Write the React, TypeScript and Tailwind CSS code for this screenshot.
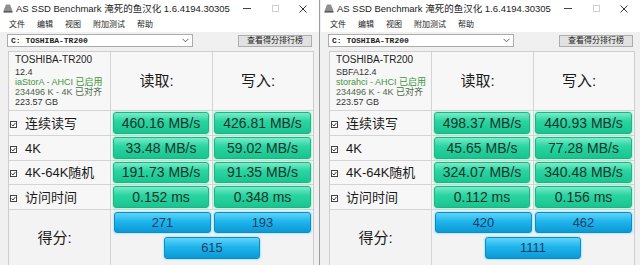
import React from "react";

type Drive = {
  model: string;
  firmware: string;
  driver: string;
  align: string;
  size: string;
  rows: { label: string; read: string; write: string }[];
  score: { read: string; write: string; total: string };
};

const drives: Drive[] = [
  {
    model: "TOSHIBA-TR200",
    firmware: "12.4",
    driver: "iaStorA - AHCI 已启用",
    align: "234496 K - 4K 已对齐",
    size: "223.57 GB",
    rows: [
      { label: "连续读写", read: "460.16 MB/s", write: "426.81 MB/s" },
      { label: "4K", read: "33.48 MB/s", write: "59.02 MB/s" },
      { label: "4K-64K随机", read: "191.73 MB/s", write: "91.35 MB/s" },
      { label: "访问时间", read: "0.152 ms", write: "0.348 ms" },
    ],
    score: { read: "271", write: "193", total: "615" },
  },
  {
    model: "TOSHIBA-TR200",
    firmware: "SBFA12.4",
    driver: "storahci - AHCI 已启用",
    align: "234496 K - 4K 已对齐",
    size: "223.57 GB",
    rows: [
      { label: "连续读写", read: "498.37 MB/s", write: "440.93 MB/s" },
      { label: "4K", read: "45.65 MB/s", write: "77.28 MB/s" },
      { label: "4K-64K随机", read: "324.07 MB/s", write: "340.48 MB/s" },
      { label: "访问时间", read: "0.112 ms", write: "0.156 ms" },
    ],
    score: { read: "420", write: "462", total: "1111" },
  },
];

const font = "font-['Liberation_Sans','Noto_Sans_CJK_SC',sans-serif]";

function GreenBox({ value }: { value: string }) {
  return (
    <div className="flex h-full items-center justify-center rounded-[3px] border border-[#1fb386] bg-[linear-gradient(to_bottom,#79ecc9,#2bd5a2_40%,#1ac490)] text-[14px] text-[#1a352d] shadow-[0_0_0_1px_#bff5df,0_0_3px_#9aeccb]">
      {value}
    </div>
  );
}

function BlueBox({ value, className = "" }: { value: string; className?: string }) {
  return (
    <div
      className={`flex items-center justify-center rounded-[3px] border border-[#0b8ec6] bg-[linear-gradient(to_bottom,#5fd5f9,#1fb5ec_45%,#0c98d4)] text-[13px] text-[#1d3e68] shadow-[0_0_0_1px_#bfeafb,0_0_3px_#9fe0f7] ${className}`}
    >
      {value}
    </div>
  );
}

function Check() {
  return (
    <svg width="7" height="7" viewBox="0 0 7 7" className="mt-[2px] shrink-0">
      <rect x="0.5" y="0.5" width="6" height="6" fill="#fff" stroke="#444" />
      <path d="M1.6 3.5 L3 5 L5.4 2" fill="none" stroke="#222" strokeWidth="0.9" />
    </svg>
  );
}

function Window({ d, first }: { d: Drive; first: boolean }) {
  return (
    <div
      className={`h-[265px] w-[320px] overflow-hidden bg-[#f0f0f0] text-[#1a1a1a] ${font} ${
        first ? "border-r border-[#9c9c9c]" : "pl-px"
      }`}
    >
      {/* title bar */}
      <div className="flex h-[17px] items-center bg-white">
        <svg width="10" height="9" viewBox="0 0 10 9" className="ml-[3px]">
          <path d="M3 0.5 H7 L9.5 7 H0.5 Z" fill="#8f8f8f" />
          <rect x="0.5" y="7" width="9" height="1.6" fill="#5a5a5a" />
        </svg>
        <span className="ml-[3px] text-[9.5px] leading-none text-[#222]">
          AS SSD Benchmark 淹死的鱼汉化 1.6.4194.30305
        </span>
        <div className="ml-auto mr-[2px] flex h-full items-center text-[#333]">
          <span className="flex w-[28px] justify-center">
            <span className="h-px w-[8px] bg-[#444]" />
          </span>
          <span className="flex w-[28px] justify-center">
            <span className="h-[7px] w-[7px] border border-[#cfcfcf]" />
          </span>
          <span className="flex w-[28px] justify-center">
            <svg width="8" height="8" viewBox="0 0 8 8">
              <path d="M0.5 0.5 L7.5 7.5 M7.5 0.5 L0.5 7.5" stroke="#333" strokeWidth="1" />
            </svg>
          </span>
        </div>
      </div>

      {/* menu */}
      <div className="flex h-[15px] items-center gap-[12px] bg-white pl-[9px] text-[8px] text-[#222]">
        <span>文件</span>
        <span>编辑</span>
        <span>视图</span>
        <span>附加测试</span>
        <span>帮助</span>
      </div>

      {/* toolbar */}
      <div className="flex items-center pt-[2px]">
        <div className="ml-[7px] flex h-[13px] w-[186px] items-center border border-[#acacac] bg-white pl-[3px] pr-[3px]">
          <span className="font-['Liberation_Mono',monospace] text-[8px] font-bold leading-none text-[#222]">
            C: TOSHIBA-TR200
          </span>
          <svg width="7" height="5" viewBox="0 0 7 5" className="ml-auto">
            <path d="M0.5 0.8 L3.5 3.8 L6.5 0.8" fill="none" stroke="#555" strokeWidth="0.9" />
          </svg>
        </div>
        <div className="ml-auto mr-[7px] flex h-[12px] w-[74px] items-center justify-center border border-[#adadad] bg-[#e1e1e1] text-[8px] leading-none text-[#222]">
          查看得分排行榜
        </div>
      </div>

      {/* panel */}
      <div className="ml-[8px] mt-[4px] grid w-[306px] grid-cols-[101px_101px_100px] grid-rows-[58px_24px_24px_23px_24px_60px] gap-px border border-[#cdcdcd] bg-[#d4d4d4]">
        <div className="bg-[#f7f7f7] pl-[6px] pt-[2px]">
          <div className="text-[10px] leading-[12px] text-[#222]">{d.model}</div>
          <div className="mt-px text-[9px] leading-[10px] text-[#333]">{d.firmware}</div>
          <div className="whitespace-nowrap text-[9px] leading-[10px] text-[#3e9640]">{d.driver}</div>
          <div className="whitespace-nowrap text-[9px] leading-[10px] text-[#4b6b47]">{d.align}</div>
          <div className="text-[9px] leading-[10px] text-[#333]">{d.size}</div>
        </div>
        <div className="flex items-center justify-center bg-[#f7f7f7] pr-[10px] text-[15px]">读取:</div>
        <div className="flex items-center justify-center bg-[#f7f7f7] pr-[10px] text-[15px]">写入:</div>

        {d.rows.map((r) => (
          <React.Fragment key={r.label}>
            <div className="flex items-center gap-[8px] bg-[#f7f7f7] pl-[1px]">
              <Check />
              <span className="text-[13px] leading-none">{r.label}</span>
            </div>
            <div className="bg-[#f7f7f7] pb-px pl-[2px] pr-[3px] pt-px">
              <GreenBox value={r.read} />
            </div>
            <div className="bg-[#f7f7f7] pb-px pl-[1px] pr-[2px] pt-px">
              <GreenBox value={r.write} />
            </div>
          </React.Fragment>
        ))}

        <div className="flex items-start justify-center bg-[#f3f3f3] pr-[10px] pt-[17px] text-[15px]">
          得分:
        </div>
        <div className="col-span-2 flex flex-col bg-[#f3f3f3] pt-[2px]">
          <div className="flex gap-[3px] pl-[3px] pr-[2px]">
            <BlueBox value={d.score.read} className="h-[21px] flex-1" />
            <BlueBox value={d.score.write} className="h-[21px] flex-1" />
          </div>
          <div className="mt-[4px] flex justify-center">
            <BlueBox value={d.score.total} className="h-[22px] w-[96px]" />
          </div>
        </div>
      </div>
    </div>
  );
}

export default function App() {
  return (
    <div className="flex h-[265px] w-[640px] overflow-hidden bg-[#f0f0f0]">
      {drives.map((d, i) => (
        <Window key={i} d={d} first={i === 0} />
      ))}
    </div>
  );
}
